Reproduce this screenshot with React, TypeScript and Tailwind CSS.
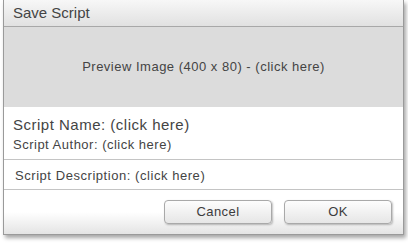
import React from 'react';

const font = "font-['Liberation_Sans',Arial,sans-serif]";

const DialogButton: React.FC<{ label: string }> = ({ label }) => (
  <button className="h-[24px] w-[108px] rounded-[4px] border border-[#a9a9a9] bg-gradient-to-b from-[#fdfdfd] to-[#e6e6e6] text-[13px] tracking-[0.4px] text-[#3c3c3c] shadow-[1px_1px_2px_rgba(0,0,0,0.25)]">
    {label}
  </button>
);

const App: React.FC = () => {
  return (
    <div className={`h-[246px] w-[408px] bg-white ${font}`}>
      <div className="ml-[3px] flex w-[401px] flex-col border-x border-b border-[#9a9a9a] shadow-[2px_3px_4px_rgba(0,0,0,0.35)]">
        {/* title bar */}
        <div className="flex h-[27px] items-center border-b border-[#a8a8a8] bg-gradient-to-b from-[#f7f7f7] to-[#e1e1e1] pl-[9px] text-[15px] text-[#444]">
          Save Script
        </div>

        {/* preview */}
        <div className="flex h-[80px] items-center justify-center bg-[#dcdcdc] text-[13px] tracking-[0.5px] text-[#444]">
          Preview Image (400 x 80) - (click here)
        </div>

        {/* name + author */}
        <div className="flex flex-col border-b border-[#c4c4c4] px-[9px] pb-[5px] pt-[8px] tracking-[0.5px] text-[#444]">
          <span className="text-[15px] leading-[20px]">Script Name: (click here)</span>
          <span className="text-[13px] leading-[19px]">Script Author: (click here)</span>
        </div>

        {/* description */}
        <div className="flex h-[30px] items-center border-b border-[#c4c4c4] px-[11px] pt-[2px] text-[13px] tracking-[0.55px] text-[#444]">
          Script Description: (click here)
        </div>

        {/* footer */}
        <div className="flex h-[44px] items-start justify-end gap-[12px] bg-gradient-to-b from-white from-50% to-[#e4e4e4] pr-[11px] pt-[10px]">
          <DialogButton label="Cancel" />
          <DialogButton label="OK" />
        </div>
      </div>
    </div>
  );
};

export default App;
